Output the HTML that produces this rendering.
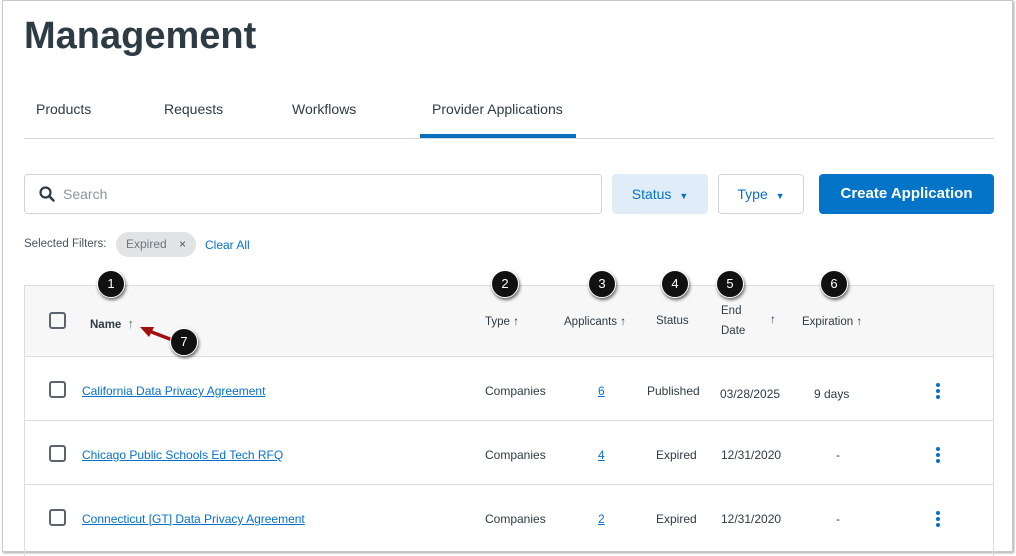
<!DOCTYPE html>
<html><head><style>
*{margin:0;padding:0;box-sizing:border-box}
body{width:1016px;height:554px;background:#fff;font-family:"Liberation Sans",sans-serif;color:#2d3b45;position:relative;overflow:hidden}
.a{position:absolute;white-space:nowrap}
.frame{position:absolute;left:2px;top:0;width:1011px;height:552px;border:1px solid #c8c8c8;box-shadow:1px 1px 2px rgba(0,0,0,.35)}
.tab{font-size:14px;top:101px;color:#2d3b45}
.cb{position:absolute;width:17px;height:17px;border:2px solid #5a6470;border-radius:3px}
.th{font-size:11.5px;color:#2d3b45}
.td{font-size:12px;color:#2d3b45}
.lk{font-size:12px;color:#0770c8;text-decoration:underline}
.c{position:absolute;width:28px;height:28px;border-radius:50%;background:#111;border:1.5px solid #fff;color:#fff;font-size:13px;text-align:center;line-height:25px;box-shadow:1px 2px 3px rgba(0,0,0,.6)}
.dots{position:absolute;width:4px}
.dots i{display:block;width:4px;height:4px;border-radius:50%;background:#0770c8;margin-bottom:2px}
.row{position:absolute;left:24px;width:970px;border-top:1px solid #dcdcdc}
</style></head><body>
<div class="frame"></div>
<div class="a" style="left:24px;top:15px;font-size:38px;font-weight:bold;color:#2d3b45">Management</div>
<div class="a tab" style="left:36px">Products</div>
<div class="a tab" style="left:164px">Requests</div>
<div class="a tab" style="left:292px">Workflows</div>
<div class="a tab" style="left:432px">Provider Applications</div>
<div class="a" style="left:24px;top:138px;width:970px;height:1px;background:#d8d8d8"></div>
<div class="a" style="left:420px;top:134px;width:156px;height:4px;background:#0770c0"></div>

<div class="a" style="left:24px;top:174px;width:578px;height:40px;border:1px solid #d0d4d8;border-radius:4px"></div>
<svg class="a" style="left:39px;top:186px" width="16" height="16" viewBox="0 0 16 16"><circle cx="6.5" cy="6.5" r="5" fill="none" stroke="#2d3b45" stroke-width="2.2"/><path d="M10 10l4.5 4.5" stroke="#2d3b45" stroke-width="2.4" stroke-linecap="round"/></svg>
<div class="a" style="left:63px;top:186px;font-size:14px;color:#8b969e">Search</div>
<div class="a" style="left:612px;top:174px;width:96px;height:40px;background:#e0edf8;border-radius:4px;color:#0770c8;font-size:14px;text-align:center;line-height:40px">Status <span style="font-size:9px;margin-left:4px">▼</span></div>
<div class="a" style="left:718px;top:174px;width:86px;height:40px;border:1px solid #d0d4d8;border-radius:4px;color:#0770c8;font-size:14px;text-align:center;line-height:38px">Type <span style="font-size:9px;margin-left:4px">▼</span></div>
<div class="a" style="left:819px;top:174px;width:175px;height:40px;background:#0374c8;border-radius:4px;color:#fff;font-size:15px;font-weight:bold;text-align:center;line-height:40px">Create Application</div>

<div class="a" style="left:24px;top:238px;font-size:11.5px;color:#4a5660">Selected Filters:</div>
<div class="a" style="left:116px;top:232px;width:80px;height:25px;background:#e2e3e4;border-radius:13px;font-size:12px;color:#6b7780;line-height:25px;padding-left:10px">Expired <span style="margin-left:9px;color:#4a5660">×</span></div>
<div class="a" style="left:205px;top:238px;font-size:12px;color:#0770c8">Clear All</div>

<div class="a" style="left:24px;top:285px;width:970px;height:72px;background:#f7f7f7;border:1px solid #dcdcdc"></div>
<div class="a" style="left:24px;top:356px;width:1px;height:200px;background:#dcdcdc"></div>
<div class="a" style="left:993px;top:356px;width:1px;height:200px;background:#dcdcdc"></div>
<div class="cb" style="left:49px;top:312px"></div>
<div class="a th" style="left:90px;top:316px;font-weight:bold">Name <span style="color:#6b7780;font-weight:normal;margin-left:3px;font-size:13px">↑</span></div>
<div class="a th" style="left:485px;top:316px">Type ↑</div>
<div class="a th" style="left:564px;top:316px">Applicants ↑</div>
<div class="a th" style="left:656px;top:315px">Status</div>
<div class="a th" style="left:721px;top:305px">End</div>
<div class="a th" style="left:721px;top:325px">Date</div>
<div class="a th" style="left:770px;top:314px">↑</div>
<div class="a th" style="left:802px;top:316px">Expiration ↑</div>

<div class="row" style="top:420px"></div>
<div class="row" style="top:484px"></div>

<div class="cb" style="left:49px;top:381px"></div>
<div class="a lk" style="left:82px;top:384px">California Data Privacy Agreement</div>
<div class="a td" style="left:485px;top:384px">Companies</div>
<div class="a lk" style="left:598px;top:384px">6</div>
<div class="a td" style="left:647px;top:384px">Published</div>
<div class="a td" style="left:720px;top:387px">03/28/2025</div>
<div class="a td" style="left:814px;top:387px">9 days</div>
<div class="dots" style="left:936px;top:383px"><i></i><i></i><i></i></div>

<div class="cb" style="left:49px;top:445px"></div>
<div class="a lk" style="left:82px;top:448px">Chicago Public Schools Ed Tech RFQ</div>
<div class="a td" style="left:485px;top:448px">Companies</div>
<div class="a lk" style="left:598px;top:448px">4</div>
<div class="a td" style="left:656px;top:448px">Expired</div>
<div class="a td" style="left:721px;top:448px">12/31/2020</div>
<div class="a td" style="left:836px;top:448px">-</div>
<div class="dots" style="left:936px;top:447px"><i></i><i></i><i></i></div>

<div class="cb" style="left:49px;top:509px"></div>
<div class="a lk" style="left:82px;top:512px">Connecticut [GT] Data Privacy Agreement</div>
<div class="a td" style="left:485px;top:512px">Companies</div>
<div class="a lk" style="left:598px;top:512px">2</div>
<div class="a td" style="left:656px;top:512px">Expired</div>
<div class="a td" style="left:721px;top:512px">12/31/2020</div>
<div class="a td" style="left:836px;top:512px">-</div>
<div class="dots" style="left:936px;top:511px"><i></i><i></i><i></i></div>

<svg class="a" style="left:135px;top:318px" width="50" height="30"><path d="M40 23L14 13" stroke="#a50e0e" stroke-width="3.5"/><path d="M5 9l14 0-5 10z" fill="#a50e0e"/></svg>
<div class="c" style="left:97px;top:270px">1</div>
<div class="c" style="left:491px;top:270px">2</div>
<div class="c" style="left:588px;top:270px">3</div>
<div class="c" style="left:661px;top:270px">4</div>
<div class="c" style="left:716px;top:270px">5</div>
<div class="c" style="left:820px;top:270px">6</div>
<div class="c" style="left:170px;top:328px">7</div>
</body></html>
